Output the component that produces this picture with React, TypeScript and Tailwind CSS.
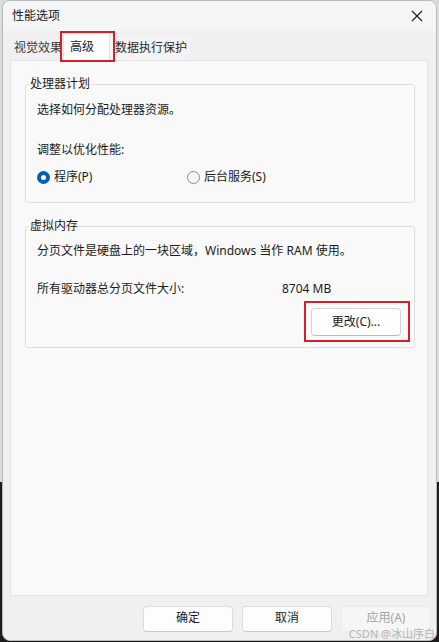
import React from "react";

const font = { fontFamily: '"Noto Sans", "Noto Sans CJK SC", sans-serif' };

function Radio({ checked, label }: { checked?: boolean; label: string }) {
  return (
    <div className="flex items-center gap-[4px]">
      {checked ? (
        <span className="box-border h-[13px] w-[13px] rounded-full border-[4px] border-[#005fb8] bg-white" />
      ) : (
        <span className="box-border h-[13px] w-[13px] rounded-full border border-[#8b8b8b] bg-[#f6f6f6]" />
      )}
      <span className="leading-[16px]">{label}</span>
    </div>
  );
}

function Group({ title, children, className }: { title: string; children: React.ReactNode; className?: string }) {
  return (
    <div className={"relative ml-[14px] mr-[12px] rounded-[3px] border border-[#dedede] " + (className ?? "")}>
      <span className="absolute -top-[9px] left-[3px] bg-[#f9f9f9] px-[1px] leading-[16px]">{title}</span>
      {children}
    </div>
  );
}

function FooterButton({ label, disabled }: { label: string; disabled?: boolean }) {
  return (
    <div
      className={
        "flex h-[26px] w-[90px] items-center justify-center rounded-[4px] border pb-[2px] leading-[16px] " +
        (disabled
          ? "border-[#ececec] bg-[#f6f6f6] text-[#a3a3a3]"
          : "border-[#dcdcdc] border-b-[#c9c9c9] bg-[#fdfdfd] text-[#1b1b1b]")
      }
    >
      {label}
    </div>
  );
}

export default function App() {
  return (
    <div
      className="relative h-[642px] w-[439px] overflow-hidden bg-[linear-gradient(to_bottom,#dcdcdc_0px,#dcdcdc_482px,#1c1c1c_482px)] text-[12px] text-[#1b1b1b]"
      style={font}
    >
      <div className="ml-[2px] flex h-[641px] w-[435px] flex-col overflow-hidden rounded-[8px] border border-[#b9b9b9] bg-[#f0f0f0]">
        {/* title bar */}
        <div className="flex h-[30px] shrink-0 items-center justify-between bg-[#f4f5f7] pl-[9px] pr-[10px]">
          <span className="leading-[16px]">性能选项</span>
          <svg width="12" height="12" viewBox="0 0 12 12" className="mr-[3px]">
            <path d="M1 1 L11 11 M11 1 L1 11" stroke="#1b1b1b" strokeWidth="1.1" fill="none" />
          </svg>
        </div>

        {/* tabs */}
        <div className="relative z-10 ml-[7px] flex h-[29px] shrink-0 items-end">
          <div className="flex h-[24px] w-[53px] items-center pl-[4px] leading-[16px] text-[#3a3a3a]">
            <span className="whitespace-nowrap">视觉效果</span>
          </div>
          <div className="relative -mb-[1px] flex h-[28px] w-[47px] items-center border border-b-0 border-[#e3e3e3] bg-white pl-[6px] pb-[2px] leading-[16px]">
            高级
            <span className="pointer-events-none absolute -left-[4px] -top-[3px] h-[31px] w-[55px] border-[2px] border-[#d81e28]" />
          </div>
          <div className="flex h-[24px] w-[80px] items-center bg-[#f3f3f3] pl-[5px] leading-[16px] text-[#2a2a2a]">
            数据执行保护
          </div>
        </div>

        {/* panel */}
        <div className="ml-[7px] mr-[8px] flex-1 border border-[#e4e4e4] bg-[#f9f9f9]">
          <Group title="处理器计划" className="mt-[23px]">
            <div className="px-[11px] pt-[17px] pb-[17px]">
              <div className="leading-[16px]">选择如何分配处理器资源。</div>
              <div className="mt-[24px] leading-[16px]">调整以优化性能:</div>
              <div className="mt-[11px] flex">
                <div className="w-[150px]">
                  <Radio checked label="程序(P)" />
                </div>
                <Radio label="后台服务(S)" />
              </div>
            </div>
          </Group>

          <Group title="虚拟内存" className="mt-[23px]">
            <div className="pl-[11px] pr-[13px] pt-[16px] pb-[11px]">
              <div className="leading-[16px]">分页文件是硬盘上的一块区域，Windows 当作 RAM 使用。</div>
              <div className="mt-[22px] flex leading-[16px]">
                <span className="w-[245px]">所有驱动器总分页文件大小:</span>
                <span>8704 MB</span>
              </div>
              <div className="mt-[11px] flex justify-end">
                <div className="relative">
                  <div className="flex h-[28px] w-[90px] items-center justify-center rounded-[4px] border border-[#d3d3d3] border-b-[#bcbcbc] bg-[#fefefe] leading-[16px]">
                    更改(C)...
                  </div>
                  <span className="pointer-events-none absolute -bottom-[6px] -left-[7px] -right-[9px] -top-[7px] border-[2px] border-[#d81e28]" />
                </div>
              </div>
            </div>
          </Group>
        </div>

        {/* footer */}
        <div className="flex h-[44px] shrink-0 items-start justify-end gap-[9px] pr-[5px] pt-[10px]">
          <FooterButton label="确定" />
          <FooterButton label="取消" />
          <FooterButton label="应用(A)" disabled />
        </div>
      </div>

      <span className="absolute bottom-[2px] right-[4px] text-[11px] leading-[12px] text-[#b4b4b4]">
        CSDN @冰山序白
      </span>
    </div>
  );
}
